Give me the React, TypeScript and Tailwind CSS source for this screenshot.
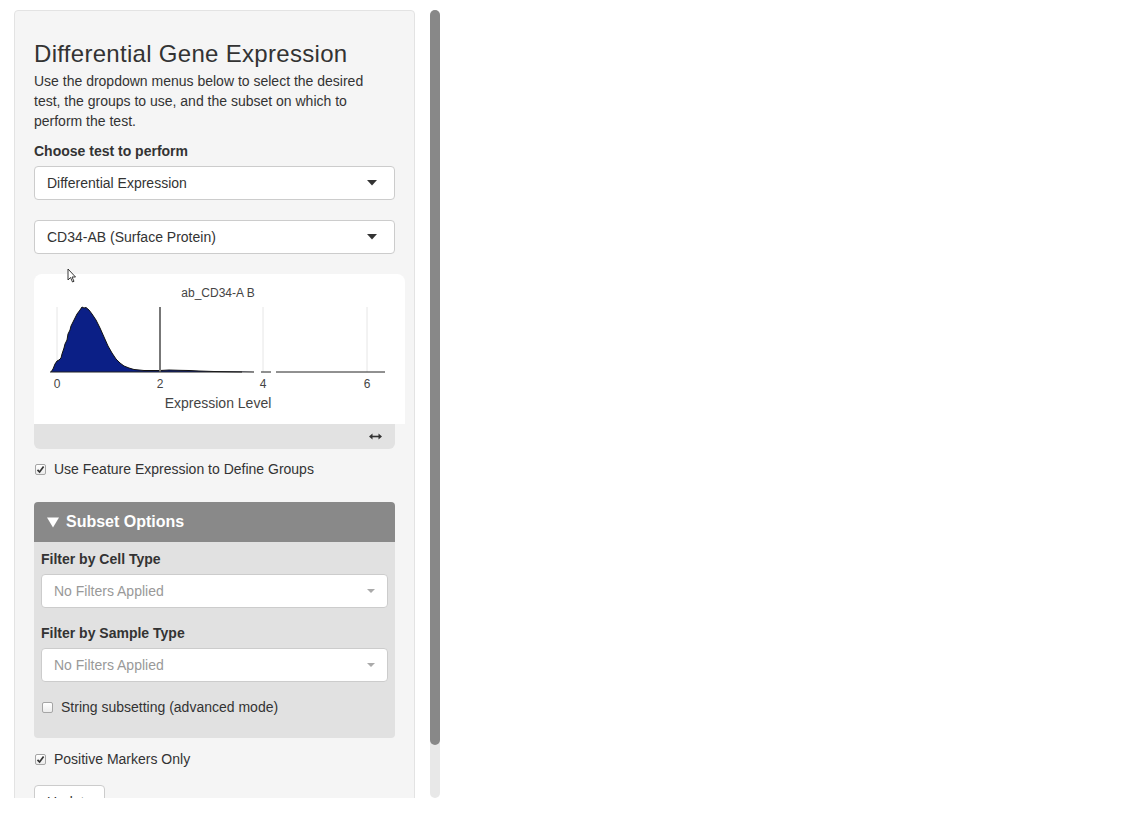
// Differential expression side panel
const densityPoints: [number, number][] = [
  [17, 98], [19, 95], [21, 90], [23, 87], [25, 86], [27, 84], [28, 80], [30, 74], [31, 70],
  [33, 66], [34, 60], [36, 56], [37, 52], [39, 48], [40, 46], [42, 42], [43, 40], [46, 36],
  [48, 33], [50, 34], [52, 33.5], [55, 36], [58, 40], [62, 46], [66, 54], [70, 63], [74, 72],
  [78, 79], [82, 85], [86, 89], [90, 92], [95, 94], [100, 95.5], [110, 96.5], [120, 96.5],
  [126, 96.5], [135, 96], [145, 96.3], [155, 96.5], [165, 97], [180, 97.5], [200, 97.8], [220, 98],
];

function Checkbox({ checked }: { checked: boolean }) {
  return (
    <span className="flex h-[11px] w-[11px] items-center justify-center rounded-[2px] border border-[#a5a5a5] bg-gradient-to-b from-white to-[#ececec]">
      {checked && (
        <svg width="9" height="9" viewBox="0 0 9 9">
          <path d="M1.5 4.8 L3.6 7 L7.6 1.6" fill="none" stroke="#333" strokeWidth="1.7" />
        </svg>
      )}
    </span>
  );
}

function CheckRow({ checked, label, className }: { checked: boolean; label: string; className: string }) {
  return (
    <div className={`flex h-[20px] items-center ${className}`}>
      <Checkbox checked={checked} />
      <span className="ml-[8px] text-[14px] text-[#333]">{label}</span>
    </div>
  );
}

function Select({ value }: { value: string }) {
  return (
    <div className="flex h-[34px] items-center justify-between rounded-[4px] border border-[#cccccc] bg-white pl-[12px] pr-[17px]">
      <span className="text-[14px] text-[#333]">{value}</span>
      <svg width="10" height="6" viewBox="0 0 10 6">
        <path d="M0 0 H10 L5 5.5 Z" fill="#333" />
      </svg>
    </div>
  );
}

function FilterSelect() {
  return (
    <div className="flex h-[34px] items-center justify-between rounded-[4px] border border-[#cccccc] bg-white pl-[12px] pr-[12px]">
      <span className="text-[14px] text-[#999]">No Filters Applied</span>
      <svg width="8" height="4" viewBox="0 0 8 4">
        <path d="M0 0 H8 L4 4 Z" fill="#aaa" />
      </svg>
    </div>
  );
}

function DensityChart() {
  const area =
    'M' + densityPoints.map(([x, y]) => `${x} ${y}`).join(' L') + ' Z';
  const outline = 'M' + densityPoints.map(([x, y]) => `${x} ${y}`).join(' L');
  return (
    <svg width="371" height="150" className="block">
      <text x="184" y="23" textAnchor="middle" fontSize="12" fill="#444" fontFamily="Liberation Sans, Arial, sans-serif">
        ab_CD34-A B
      </text>
      {[23, 229, 333].map((x) => (
        <line key={x} x1={x} y1="33" x2={x} y2="98" stroke="#e6e6e6" strokeWidth="1" />
      ))}
      <path d={area} fill="#0b1f86" />
      <path d={outline} fill="none" stroke="#111" strokeWidth="1" />
      <line x1="126" y1="33" x2="126" y2="98" stroke="#777" strokeWidth="2" />
      <line x1="16" y1="98" x2="208" y2="98" stroke="#222" strokeWidth="1" />
      <line x1="227" y1="98" x2="237" y2="98" stroke="#222" strokeWidth="1" />
      <line x1="242" y1="98" x2="351" y2="98" stroke="#222" strokeWidth="1" />
      {[
        [23, '0'],
        [126, '2'],
        [229, '4'],
        [333, '6'],
      ].map(([x, t]) => (
        <text key={t} x={x} y="114" textAnchor="middle" fontSize="12" fill="#444" fontFamily="Liberation Sans, Arial, sans-serif">
          {t}
        </text>
      ))}
      <text x="184" y="134" textAnchor="middle" fontSize="14" fill="#444" fontFamily="Liberation Sans, Arial, sans-serif">
        Expression Level
      </text>
    </svg>
  );
}

export default function App() {
  return (
    <div className="relative min-h-[820px] bg-white font-['Liberation_Sans',Arial,sans-serif]">
      <div className="flex gap-[15px] pl-[14px] pt-[10px]">
        <div className="h-[788px] w-[401px] overflow-hidden">
          <div className="rounded-[4px] border border-[#e3e3e3] bg-[#f5f5f5] px-[19px] pt-[29px] pb-[20px]">
            <h3 className="h-[27px] text-[24px] leading-[27px] tracking-[0.3px] text-[#333]">Differential Gene Expression</h3>
            <p className="mt-[4px] w-[345px] text-[14px] leading-[20px] text-[#333]">
              Use the dropdown menus below to select the desired test, the groups to use, and the subset on which to
              perform the test.
            </p>
            <div className="mt-[10px] text-[14px] font-bold leading-[20px] text-[#333]">Choose test to perform</div>
            <div className="mt-[5px]">
              <Select value="Differential Expression" />
            </div>
            <div className="mt-[20px]">
              <Select value="CD34-AB (Surface Protein)" />
            </div>

            <div className="relative mt-[20px]">
              <div className="w-[371px] overflow-hidden rounded-t-[8px] bg-white">
                <DensityChart />
              </div>
              <div className="flex h-[25px] items-center justify-end rounded-b-[6px] bg-[#e2e2e2] pr-[13px]">
                <svg width="13" height="7" viewBox="0 0 13 7">
                  <path d="M0 3.5 L3.5 0.5 V6.5 Z M13 3.5 L9.5 0.5 V6.5 Z" fill="#333" />
                  <line x1="2" y1="3.5" x2="11" y2="3.5" stroke="#333" strokeWidth="1.6" />
                </svg>
              </div>
            </div>

            <CheckRow checked label="Use Feature Expression to Define Groups" className="mt-[10px] pl-[1px]" />

            <div className="mt-[23px] overflow-hidden rounded-[4px]">
              <div className="flex h-[40px] items-center bg-[#898989] pl-[13px] text-[16px] font-bold text-white">
                <svg width="12" height="11" viewBox="0 0 12 11">
                  <path d="M0 0.5 H12 L6 10.5 Z" fill="white" />
                </svg>
                <span className="ml-[7px]">Subset Options</span>
              </div>
              <div className="bg-[#e1e1e1] px-[7px] pt-[7px] pb-[21px]">
                <div className="text-[14px] font-bold leading-[20px] text-[#333]">Filter by Cell Type</div>
                <div className="mt-[5px]">
                  <FilterSelect />
                </div>
                <div className="mt-[15px] text-[14px] font-bold leading-[20px] text-[#333]">Filter by Sample Type</div>
                <div className="mt-[5px]">
                  <FilterSelect />
                </div>
                <CheckRow checked={false} label="String subsetting (advanced mode)" className="mt-[15px] pl-[1px]" />
              </div>
            </div>

            <CheckRow checked label="Positive Markers Only" className="mt-[11px] pl-[1px]" />

            <button className="mt-[16px] rounded-[4px] border border-[#cccccc] bg-white px-[12px] py-[6px] text-[14px] leading-[20px] text-[#333]">
              Update
            </button>
          </div>
        </div>

        <div className="relative h-[788px] w-[10px] rounded-full bg-[#e8e8e8]">
          <div className="h-[735px] w-[10px] rounded-full bg-[#888888]" />
        </div>
      </div>

      {/* mouse pointer over chart */}
      <svg className="absolute left-[67px] top-[268px]" width="10" height="16" viewBox="0 0 10 16">
        <path d="M1 1 L1 12 L3.5 9.5 L5.5 14 L7 13.3 L5 9 L8.5 9 Z" fill="white" stroke="#222" strokeWidth="0.9" />
      </svg>
    </div>
  );
}
